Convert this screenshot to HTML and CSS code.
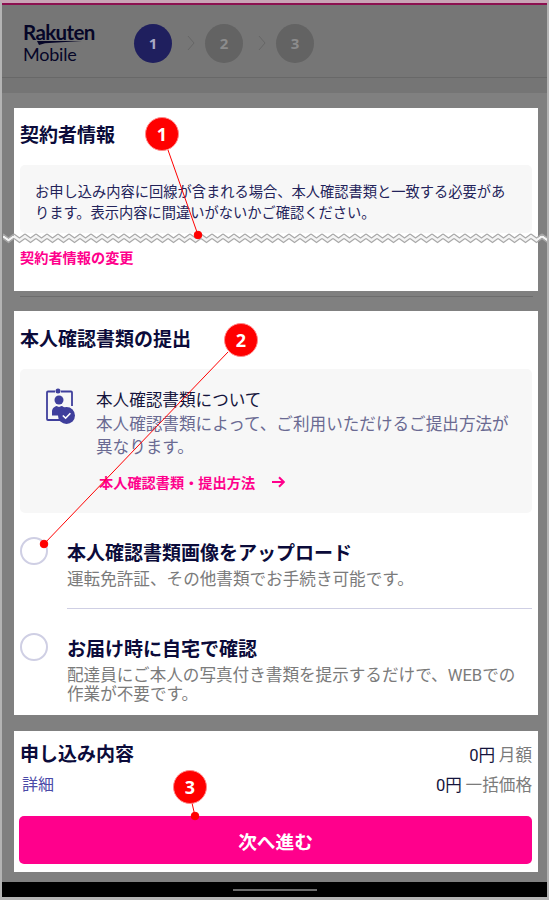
FILE: index.html
```html
<!DOCTYPE html>
<html lang="ja">
<head>
    <meta charset="UTF-8">
    <title>Rakuten Mobile</title>
    <link rel="stylesheet" href="styles.css">
</head>
<body>
<div class="screen">
    <header class="top">
        <div class="logo">
            <span class="logo-rakuten">Rakuten</span>
            <svg class="logo-swoosh" width="45" height="4" viewBox="0 0 45 4"><path d="M0 0H45L8 2.200 2 4Z" fill="#060628"/></svg>
            <span class="logo-mobile">Mobile</span>
        </div>
        <div class="steps">
            <div class="step active">1</div>
            <svg class="chev" width="8" height="16" viewBox="0 0 8 16"><path d="M1 1L7 8 1 15" fill="none" stroke="#666" stroke-width="1"/></svg>
            <div class="step">2</div>
            <svg class="chev" width="8" height="16" viewBox="0 0 8 16"><path d="M1 1L7 8 1 15" fill="none" stroke="#666" stroke-width="1"/></svg>
            <div class="step">3</div>
        </div>
    </header>
    <div class="header-gap"></div>

    <main class="content">
        <section class="card card-contract">
            <h2>契約者情報</h2>
            <div class="notice">お申し込み内容に回線が含まれる場合、本人確認書類と一致する必要があります。表示内容に間違いがないかご確認ください。</div>
            <a class="link-change">契約者情報の変更</a>
        </section>
        <div class="divider"></div>

        <section class="card card-docs">
            <h2>本人確認書類の提出</h2>
            <div class="doc-info">
                <svg class="doc-icon" width="30" height="37" viewBox="0 0 30 37">
                    <path d="M9 3.500H2a1 1 0 0 0-1 1V31a1 1 0 0 0 1 1H16M15 3.500h10a1 1 0 0 1 1 1V18" fill="none" stroke="#3f3f9c" stroke-width="1.800"/>
                    <circle cx="12" cy="3" r="2.500" fill="#3f3f9c"/>
                    <circle cx="13" cy="12" r="4.500" fill="#3f3f9c"/>
                    <path d="M6 27.500v-4c0-3 2.500-5 4.500-5.500l2.500 1 2.500-1c1.500.4 2.800 1.200 3.600 2.300-3 1.500-5 4-5.100 7.200Z" fill="#3f3f9c"/>
                    <circle cx="20.500" cy="27.500" r="8.500" fill="#3f3f9c"/>
                    <path d="M16.800 27.500l2.800 2.700 4.800-5" fill="none" stroke="#fff" stroke-width="1.600"/>
                </svg>
                <div class="doc-text">
                    <div class="doc-title">本人確認書類について</div>
                    <div class="doc-desc">本人確認書類によって、ご利用いただけるご提出方法が異なります。</div>
                    <a class="doc-link">本人確認書類・提出方法<span class="arrow">
                        <svg width="13" height="12" viewBox="0 0 13 12"><path d="M0 6H11.500M7 1.200L11.800 6 7 10.800" fill="none" stroke="#ff008c" stroke-width="2"/></svg>
                    </span></a>
                </div>
            </div>
            <div class="option">
                <span class="radio"></span>
                <div class="option-text">
                    <div class="option-title">本人確認書類画像をアップロード</div>
                    <div class="option-desc">運転免許証、その他書類でお手続き可能です。</div>
                </div>
            </div>
            <div class="option option-last">
                <span class="radio"></span>
                <div class="option-text">
                    <div class="option-title">お届け時に自宅で確認</div>
                    <div class="option-desc">配達員にご本人の写真付き書類を提示するだけで、WEBでの作業が不要です。</div>
                </div>
            </div>
        </section>

        <section class="card card-summary">
            <div class="summary-row">
                <div class="summary-left">
                    <h2>申し込み内容</h2>
                    <a class="detail">詳細</a>
                </div>
                <div class="summary-right">
                    <div><span class="price"><span class="latin">0</span>円</span> 月額</div>
                    <div><span class="price"><span class="latin">0</span>円</span> 一括価格</div>
                </div>
            </div>
            <button class="next">次へ進む</button>
        </section>
    </main>

    <div class="nav-bar"><span class="nav-handle"></span></div>

    <!-- annotation marks over the screenshot -->
    <svg class="tear" width="544" height="11" viewBox="0 0 544 11">
        <defs>
            <pattern id="zig" width="11" height="11" patternUnits="userSpaceOnUse">
                <path d="M0 3.200L5.500 7.200 11 3.200" fill="none" stroke="#f4f4f4" stroke-width="2.600"/>
                <path d="M0 1L5.500 5 11 1" fill="none" stroke="#a8a8a8" stroke-width="1.300"/>
                <path d="M0 5.500L5.500 9.500 11 5.500" fill="none" stroke="#a8a8a8" stroke-width="1.300"/>
            </pattern>
        </defs>
        <rect width="544" height="11" fill="url(#zig)"/>
    </svg>
    <svg class="marks" width="549" height="900" viewBox="0 0 549 900">
        <g stroke="#f00" stroke-width="1" fill="#f00">
            <line x1="168" y1="150" x2="198" y2="235"/>
            <circle cx="198" cy="235" r="3.800"/>
            <line x1="228" y1="352" x2="44" y2="544"/>
            <circle cx="44" cy="544" r="3.800"/>
            <line x1="192" y1="803" x2="195" y2="816"/>
            <circle cx="195" cy="816" r="3.800"/>
        </g>
    </svg>
    <div class="badge badge-1">1</div>
    <div class="badge badge-2">2</div>
    <div class="badge badge-3">3</div>
</div>
</body>
</html>
```

FILE: styles.css
```css
* {
    box-sizing: border-box;
}
body {
    margin: 0;
    font-family: "Noto Sans CJK JP", sans-serif;
    background: #808080;
}
h2 {
    margin: 0;
    font-size: 19px;
    line-height: 26px;
    font-weight: 700;
    color: #0b0b3a;
}
.latin {
    font-family: Roboto, sans-serif;
}
.screen {
    position: relative;
    width: 549px;
    height: 900px;
    overflow: hidden;
    background: #808080;
    border: 2px solid #b4b4b4;
    border-width: 0 2px 3px 2px;
    border-top: 3px solid #c9a4b6;
}

/* header */
.top {
    display: flex;
    align-items: center;
    height: 75px;
    padding: 4px 0 0 21px;
    background: #767676;
    border-top: 2px solid #8c1050;
    border-bottom: 1px solid #686868;
}
.logo {
    display: flex;
    flex-direction: column;
    width: 72px;
    color: #060628;
    font-family: "Lato", sans-serif;
}
.logo-rakuten {
    font-size: 20.500px;
    line-height: 17px;
    font-weight: 700;
    letter-spacing: -0.600px;
}
.logo-swoosh {
    margin: 0 0 0 14px;
}
.logo-mobile {
    font-size: 18px;
    line-height: 18px;
    letter-spacing: -0.200px;
}
.steps {
    display: flex;
    align-items: center;
    gap: 12.500px;
    margin-left: 39px;
}
.chev {
    margin: 0 -2px 0 2px;
}
.step {
    display: flex;
    align-items: center;
    justify-content: center;
    width: 38px;
    height: 39px;
    border-radius: 50%;
    background: #636363;
    color: #8c8c8c;
    font-family: "Noto Sans", sans-serif;
    font-size: 15px;
    font-weight: 700;
}
.step.active {
    background: #1f1f5e;
    color: #a9a9c4;
}
.header-gap {
    height: 15px;
    background: #757575;
}

/* cards */
.content {
    display: flex;
    flex-direction: column;
    padding: 15px 9px 0 12px;
}
.card {
    background: #fff;
    padding: 0 6px;
}
.card-contract {
    height: 183px;
    padding-top: 13px;
}
.notice {
    margin-top: 18px;
    height: 68px;
    padding: 15px 25px 0 15px;
    background: #f7f7f7;
    border-radius: 5px;
    color: #23235a;
    font-size: 14.250px;
    line-height: 21px;
}
.link-change {
    display: block;
    margin-top: 14px;
    color: #ff008c;
    font-size: 14.200px;
    line-height: 20px;
    font-weight: 700;
}
.divider {
    height: 1px;
    margin: 5px 5px 14px 6px;
    background: #6d6d6d;
}
.card-docs {
    height: 404px;
    padding-top: 14px;
}
.doc-info {
    display: flex;
    margin-top: 18px;
    height: 144px;
    padding: 19px 15px 0 26px;
    background: #f7f7f7;
    border-radius: 5px;
}
.doc-icon {
    flex: none;
}
.doc-text {
    margin-left: 20px;
    flex: 1;
}
.doc-title {
    font-size: 16.600px;
    line-height: 23.500px;
    color: #14143c;
}
.doc-desc {
    font-size: 16.600px;
    line-height: 23.500px;
    color: #6a6a92;
}
.doc-link {
    display: flex;
    align-items: center;
    margin: 13.500px 0 0 3px;
    color: #ff008c;
    font-size: 14.200px;
    line-height: 20px;
    font-weight: 700;
}
.arrow {
    display: flex;
    margin-left: 17px;
}
.option {
    display: flex;
    margin-top: 24px;
}
.radio {
    flex: none;
    width: 28px;
    height: 28px;
    border: 2px solid #cfcfe4;
    border-radius: 50%;
    background: #fff;
}
.option-text {
    flex: 1;
    margin-left: 19px;
    padding: 2px 0 19.500px;
    border-bottom: 1px solid #cfcfe4;
}
.option-last .option-text {
    border-bottom: 0;
    padding: 2px 8px 0 0;
}
.option-title {
    font-size: 19px;
    line-height: 25px;
    font-weight: 700;
    color: #0b0b3a;
}
.option-desc {
    margin-top: 5.500px;
    font-family: Roboto, "Noto Sans CJK JP", sans-serif;
    font-size: 16.600px;
    line-height: 19px;
    color: #7b7b7b;
}

/* summary */
.card-summary {
    margin-top: 16px;
    height: 141px;
    padding: 9px 5px 0 6px;
}
.summary-row {
    display: flex;
    justify-content: space-between;
    height: 76px;
}
.detail {
    display: block;
    margin: 6px 0 0 2px;
    color: #4a4aa8;
    font-size: 16px;
    line-height: 22px;
}
.summary-right {
    padding-right: 1px;
    text-align: right;
    color: #7b7b7b;
    font-size: 16.600px;
    line-height: 29px;
}
.price {
    color: #14143c;
}
.next {
    display: block;
    width: 513px;
    height: 48px;
    margin-left: -1px;
    border: 0;
    border-radius: 5px;
    background: #ff008c;
    color: #fff;
    font-family: inherit;
    font-size: 18.700px;
    font-weight: 700;
}

/* bottom bar */
.nav-bar {
    position: absolute;
    left: 0;
    right: 0;
    bottom: 0;
    height: 15px;
    display: flex;
    justify-content: center;
    align-items: center;
    background: #000;
}
.nav-handle {
    width: 84px;
    height: 2px;
    background: #6c6c6c;
}

/* annotations */
.tear {
    position: absolute;
    left: 1px;
    top: 230px;
}
.marks {
    position: absolute;
    left: -2px;
    top: -3px;
}
.badge {
    position: absolute;
    display: flex;
    align-items: center;
    justify-content: center;
    width: 34px;
    height: 34px;
    border-radius: 50%;
    background: #f00;
    border: 1px solid #ff8a8a;
    color: #fff;
    font-family: "Noto Sans", sans-serif;
    font-size: 18px;
    font-weight: 700;
}
.badge-1 {
    left: 143px;
    top: 114px;
}
.badge-2 {
    left: 222px;
    top: 320px;
}
.badge-3 {
    left: 171px;
    top: 767px;
}
```
